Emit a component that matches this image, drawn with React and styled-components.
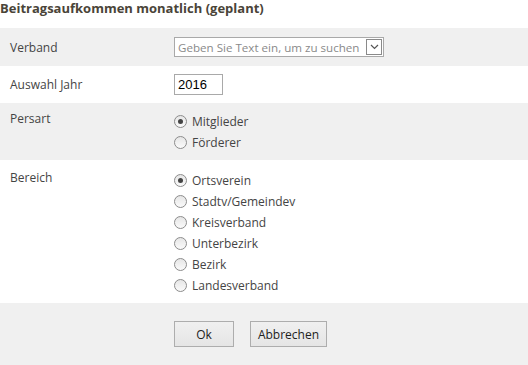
import React, { useState } from 'react';
import styled, { createGlobalStyle } from 'styled-components';

const GlobalStyle = createGlobalStyle`
    body {
        margin: 0;
        background: #fff;
        font-family: "Open Sans", "Noto Sans", sans-serif;
        font-size: 12px;
        color: #444;
    }
`

const Page = styled.div`
    width: 528px;
`

const Title = styled.h2`
    margin: 0;
    height: 28px;
    font-size: 13px;
    font-weight: bold;
    color: #4a4438;
    line-height: 16px;
    white-space: nowrap;
`

const Row = styled.div`
    display: flex;
    background: ${p => (p.$grey ? '#f0f0f0' : '#fff')};
    padding: ${p => p.$pad || '8px 0'};
    box-sizing: border-box;
`

const Label = styled.div`
    width: 164px;
    padding-left: 10px;
    margin-top: ${p => p.$shift || '0'};
    line-height: 21px;
    color: #444;
`

const Field = styled.div`
    display: flex;
    flex-direction: column;
`

const Combo = styled.div`
    display: flex;
    align-items: center;
    justify-content: space-between;
    width: 210px;
    height: 20px;
    box-sizing: border-box;
    border: 1px solid #a9a9a9;
    background: #fff;
    padding: 0 1px 0 3px;
    color: #8a8a8a;
    font-size: 11.6px;
    white-space: nowrap;
    overflow: hidden;
`

const ComboButton = styled.span`
    flex: none;
    width: 14px;
    height: 14px;
    border: 1px solid #8a8a8a;
    display: flex;
    align-items: center;
    justify-content: center;
`

const YearInput = styled.input`
    width: 49px;
    height: 21px;
    box-sizing: border-box;
    border: 1px solid #a9a9a9;
    padding: 0 3px;
    font-family: "Liberation Sans", Arial, sans-serif;
    font-size: 13px;
    color: #000;
    outline: none;
`

const RadioLine = styled.label`
    display: flex;
    align-items: center;
    height: 21px;
    color: #444;
    cursor: pointer;
`

const Circle = styled.span`
    width: 11px;
    height: 11px;
    border: 1px solid #8c8c8c;
    border-radius: 50%;
    background: linear-gradient(#e6e6e6, #fafafa);
    margin-right: 5px;
    display: flex;
    align-items: center;
    justify-content: center;
    &::after {
        content: '';
        width: 5px;
        height: 5px;
        border-radius: 50%;
        background: ${p => (p.$on ? '#444' : 'transparent')};
    }
`

const Buttons = styled.div`
    display: flex;
    gap: 16px;
`

const Button = styled.button`
    height: 26px;
    width: ${p => p.$w};
    border: 1px solid #adadad;
    background: linear-gradient(#f0f0f0, #e5e5e5);
    font-family: "Open Sans", "Noto Sans", sans-serif;
    font-size: 12px;
    color: #222;
    padding: 0;
`

const RadioGroup = ({ options, value, onChange }) => (
    <Field>
        {options.map(o => (
            <RadioLine key={o} onClick={() => onChange(o)}>
                <Circle $on={value === o} />
                {o}
            </RadioLine>
        ))}
    </Field>
)

const App = () => {
    const [persart, setPersart] = useState('Mitglieder')
    const [bereich, setBereich] = useState('Ortsverein')

    return (
        <Page>
            <GlobalStyle />
            <Title>Beitragsaufkommen monatlich (geplant)</Title>
            <Row $grey $pad="9px 0 8px">
                <Label>Verband</Label>
                <Combo>
                    Geben Sie Text ein, um zu suchen
                    <ComboButton>
                        <svg width="9" height="6" viewBox="0 0 9 6">
                            <path d="M1 1 L4.5 4.5 L8 1" fill="none" stroke="#555" strokeWidth="1.2" />
                        </svg>
                    </ComboButton>
                </Combo>
            </Row>
            <Row $pad="8px 0">
                <Label>Auswahl Jahr</Label>
                <YearInput defaultValue="2016" />
            </Row>
            <Row $grey $pad="8px 0 7px">
                <Label $shift="-3px">Persart</Label>
                <RadioGroup options={['Mitglieder', 'Förderer']} value={persart} onChange={setPersart} />
            </Row>
            <Row $pad="10px 0 7px">
                <Label $shift="-3px">Bereich</Label>
                <RadioGroup
                    options={['Ortsverein', 'Stadtv/Gemeindev', 'Kreisverband', 'Unterbezirk', 'Bezirk', 'Landesverband']}
                    value={bereich}
                    onChange={setBereich}
                />
            </Row>
            <Row $grey $pad="18px 0 18px">
                <Label />
                <Buttons>
                    <Button $w="60px">Ok</Button>
                    <Button $w="77px">Abbrechen</Button>
                </Buttons>
            </Row>
        </Page>
    )
}

export default App;
